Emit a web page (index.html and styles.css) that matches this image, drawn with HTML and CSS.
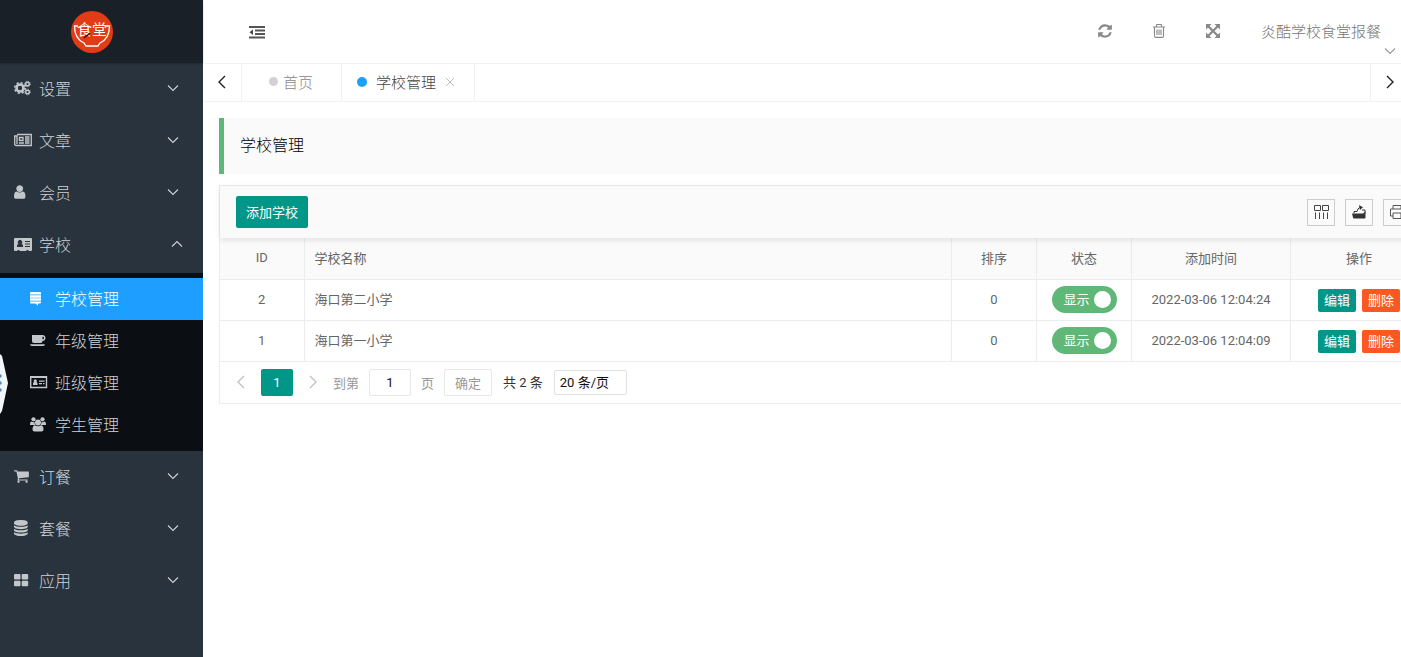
FILE: index.html
```html
<!DOCTYPE html>
<html lang="zh-CN">
<head>
    <meta charset="UTF-8">
    <meta name="viewport" content="width=device-width, initial-scale=1.0">
    <title>学校管理</title>

    <link rel="stylesheet" href="styles.css">
</head>
<body>
    <!-- 图标 -->
    <svg class="sprite" aria-hidden="true">
        <symbol id="down" viewBox="0 0 12 12"><path d="M1 3.500l5 5 5-5" fill="none" stroke="currentColor" stroke-width="1.100"/></symbol>
        <symbol id="up" viewBox="0 0 12 12"><path d="M1 8.500l5-5 5 5" fill="none" stroke="currentColor" stroke-width="1.100"/></symbol>
        <symbol id="left" viewBox="0 0 14 14"><path d="M10 1L4 7l6 6" fill="none" stroke="currentColor" stroke-width="1.400"/></symbol>
        <symbol id="right" viewBox="0 0 14 14"><path d="M4 1l6 6-6 6" fill="none" stroke="currentColor" stroke-width="1.400"/></symbol>
    </svg>

    <div class="layout">
        <aside class="sidebar">
            <div class="logo">
                <svg width="42" height="42" viewBox="0 0 42 42">
                    <circle cx="21" cy="21" r="21" fill="#e23b17"/>
                    <path d="M7 15H3.500c0 9 3 14 9.500 17l2 3h12l2-3c6.500-3 9.500-8 9.500-17H35" fill="none" stroke="#fff" stroke-width="1.300"/>
                    <text x="21" y="24" text-anchor="middle" class="logoText">食堂</text>
                    <path d="M13 27l2-2 2-1 2-2" fill="none" stroke="#3a1410" stroke-width="1.500"/>
                </svg>
            </div>

            <nav class="menu">
                <button class="menuItem">
                    <svg class="icon" viewBox="0 0 18 16">
                        <circle cx="6" cy="8" r="3.500" fill="none" stroke="currentColor" stroke-width="2.600"/>
                        <circle cx="6" cy="8" r="5.300" fill="none" stroke="currentColor" stroke-width="1.600" stroke-dasharray="2.080 2.080"/>
                        <circle cx="13.500" cy="4" r="1.800" fill="none" stroke="currentColor" stroke-width="1.400"/>
                        <circle cx="13.500" cy="4" r="2.800" fill="none" stroke="currentColor" stroke-width="1" stroke-dasharray="1.100 1.100"/>
                        <circle cx="13.500" cy="12" r="1.800" fill="none" stroke="currentColor" stroke-width="1.400"/>
                        <circle cx="13.500" cy="12" r="2.800" fill="none" stroke="currentColor" stroke-width="1" stroke-dasharray="1.100 1.100"/>
                    </svg>
                    <span>设置</span>
                    <svg class="arrow"><use href="#down"/></svg>
                </button>
                <button class="menuItem">
                    <svg class="icon" viewBox="0 0 18 16">
                        <path d="M3 2.500h14.300v11H2c-.8 0-1.300-.5-1.300-1.300V4H3v8" fill="none" stroke="currentColor" stroke-width="1.300"/>
                        <path d="M5.500 5.500h3.500v3H5.500zM5 11h5M11 5h4.500M11 7h4.500M11 9h4.500M11 11h4.500" fill="none" stroke="currentColor" stroke-width="1.300"/>
                    </svg>
                    <span>文章</span>
                    <svg class="arrow"><use href="#down"/></svg>
                </button>
                <button class="menuItem">
                    <svg class="icon" viewBox="384 0 2016 1792">
                        <path transform="translate(128 0)" d="M1536 1399q0 109-62.500 187t-150.500 78h-854q-88 0-150.500-78t-62.500-187q0-85 8.500-160.500t31.500-152 58.500-131 94-89 134.500-34.500q131 128 313 128t313-128q76 0 134.500 34.500t94 89 58.500 131 31.500 152 8.500 160.500zm-256-887q0 159-112.500 271.500t-271.500 112.500-271.500-112.500-112.500-271.500 112.500-271.500 271.500-112.500 271.500 112.500 112.500 271.500z" fill="currentColor"/>
                    </svg>
                    <span>会员</span>
                    <svg class="arrow"><use href="#down"/></svg>
                </button>
                <button class="menuItem">
                    <svg class="icon" viewBox="0 0 18 16">
                        <path fill="currentColor" fill-rule="evenodd" d="M1 2h16q1 0 1 1v11q0 1-1 1h-2.500v-1h-2v1h-7v-1h-2v1H1q-1 0-1-1V3q0-1 1-1zM3 11h6V9.500Q9 8 7.500 8a2.300 2.300 0 1 0-3 0Q3 8 3 9.500zM11 5v1h5V5zM11 7.500v1h5v-1zM11 10v1h5v-1z"/>
                    </svg>
                    <span>学校</span>
                    <svg class="arrow arrowUp"><use href="#up"/></svg>
                </button>

                <div class="subMenu">
                    <a href="#" class="subItem active">
                        <svg class="icon" viewBox="0 0 18 16">
                            <path fill="currentColor" d="M1 2h9q1 0 1 1v1.600H0V3q0-1 1-1zM0 5.200h11v2.500H0zM0 8.300h11v2.500H0zM0 11.400h11q0 2.200-1 2.200H8v2.200l-2.500-2.200H1q-1 0-1-2.200z"/>
                        </svg>
                        <span>学校管理</span>
                    </a>
                    <a href="#" class="subItem">
                        <svg class="icon" viewBox="0 0 18 16">
                            <path fill="currentColor" fill-rule="evenodd" d="M2 3h10.500c4 0 4 6 0 6 0 1.300-.7 2-2 2H4c-1.300 0-2-.7-2-2zM12.500 4.500v3c2 0 2-3 0-3zM0 12.300h15q0 1.700-2 1.700H2q-2 0-2-1.700z"/>
                        </svg>
                        <span>年级管理</span>
                    </a>
                    <a href="#" class="subItem">
                        <svg class="icon" viewBox="0 0 18 16">
                            <path d="M.7 2.700h15.800v10.800H.7z" fill="none" stroke="currentColor" stroke-width="1.400"/>
                            <path fill="currentColor" d="M1 3h15v1H1zM3 11V9.500Q3 8.500 4 8a1.600 1.600 0 1 1 2.500 0Q7.500 8.500 7.500 9.500V11zM9 6.500h5.500v1.200H9zM9 9h3v1.200H9zM13 9h1.500v1.200H13z"/>
                        </svg>
                        <span>班级管理</span>
                    </a>
                    <a href="#" class="subItem">
                        <svg class="icon" viewBox="0 0 18 16">
                            <g fill="currentColor">
                                <circle cx="3.500" cy="3.300" r="2.100"/>
                                <circle cx="12.500" cy="3.300" r="2.100"/>
                                <circle cx="8" cy="6.500" r="3"/>
                                <path d="M0 9Q0 5.500 1.500 5.500q1.500 1 3 .5 0 2 1 3zM16 9Q16 5.500 14.500 5.500q-1.500 1-3 .5 0 2-1 3zM2.500 13.500Q2.500 9.500 5 9.300q3 2 6 0 2.500.2 2.500 4.200 0 2-2 2h-7q-2 0-2-2z"/>
                            </g>
                        </svg>
                        <span>学生管理</span>
                    </a>
                </div>

                <button class="menuItem">
                    <svg class="icon" viewBox="64 0 2016 1792">
                        <path d="M704 1536q0 52-38 90t-90 38-90-38-38-90 38-90 90-38 90 38 38 90zm896 0q0 52-38 90t-90 38-90-38-38-90 38-90 90-38 90 38 38 90zm128-1088v512q0 24-16.500 42.500t-40.500 21.500l-1044 122q13 60 13 70 0 16-24 64h920q26 0 45 19t19 45-19 45-45 19h-1024q-26 0-45-19t-19-45q0-11 8-31.500t16-36 21.500-40 15.500-29.500l-177-823h-204q-26 0-45-19t-19-45 19-45 45-19h256q16 0 28.500 6.500t19.500 15.500 13 24.500 8 26 5.500 29.500 4.500 26h1201q26 0 45 19t19 45z" fill="currentColor"/>
                    </svg>
                    <span>订餐</span>
                    <svg class="arrow"><use href="#down"/></svg>
                </button>
                <button class="menuItem">
                    <svg class="icon" viewBox="128 0 2016 1792">
                        <path d="M896 768q237 0 443-43t325-127v170q0 69-103 128t-280 93.500-385 34.500-385-34.500-280-93.500-103-128v-170q119 84 325 127t443 43zm0 768q237 0 443-43t325-127v170q0 69-103 128t-280 93.500-385 34.500-385-34.500-280-93.500-103-128v-170q119 84 325 127t443 43zm0-384q237 0 443-43t325-127v170q0 69-103 128t-280 93.500-385 34.500-385-34.500-280-93.500-103-128v-170q119 84 325 127t443 43zm0-1152q208 0 385 34.500t280 93.500 103 128v128q0 69-103 128t-280 93.500-385 34.500-385-34.500-280-93.500-103-128v-128q0-69 103-128t280-93.500 385-34.500z" fill="currentColor"/>
                    </svg>
                    <span>套餐</span>
                    <svg class="arrow"><use href="#down"/></svg>
                </button>
                <button class="menuItem">
                    <svg class="icon" viewBox="0 0 18 16">
                        <g fill="currentColor">
                            <rect x="0" y="2" width="6.500" height="5.500" rx="1"/>
                            <rect x="7.700" y="2" width="6.500" height="5.500" rx="1"/>
                            <rect x="0" y="8.700" width="6.500" height="5.500" rx="1"/>
                            <rect x="7.700" y="8.700" width="6.500" height="5.500" rx="1"/>
                        </g>
                    </svg>
                    <span>应用</span>
                    <svg class="arrow"><use href="#down"/></svg>
                </button>
            </nav>
        </aside>

        <main class="main">
            <header class="header">
                <button class="iconBtn" aria-label="侧边伸缩">
                    <svg width="16" height="14" viewBox="0 0 16 14">
                        <path d="M0 2h16M6 5.500h10M6 9h10M0 12.500h16" stroke="#555" stroke-width="2"/>
                        <path d="M4 4.500v5.500L.5 7.300z" fill="#444"/>
                    </svg>
                </button>
                <div class="headerRight">
                    <button class="iconBtn" aria-label="刷新">
                        <svg width="16" height="16" viewBox="0 0 1792 1792">
                            <path d="M1639 1056q0 5-1 7-64 268-268 434.500t-478 166.500q-146 0-282.500-55t-243.500-157l-129 129q-19 19-45 19t-45-19-19-45v-448q0-26 19-45t45-19h448q26 0 45 19t19 45-19 45l-137 137q71 66 161 102t187 36q134 0 250-65t186-179q11-17 53-117 8-23 30-23h192q13 0 22.500 9.500t9.500 22.500zm25-800v448q0 26-19 45t-45 19h-448q-26 0-45-19t-19-45 19-45l138-138q-148-137-349-137-134 0-250 65t-186 179q-11 17-53 117-8 23-30 23h-199q-13 0-22.500-9.500t-9.500-22.500v-7q65-268 270-434.500t480-166.500q146 0 284 55.500t245 156.500l130-129q19-19 45-19t45 19 19 45z" fill="currentColor"/>
                        </svg>
                    </button>
                    <button class="iconBtn" aria-label="清理缓存">
                        <svg width="16" height="16" viewBox="0 0 16 16">
                            <path d="M2 4h12M5.500 4V2q0-.5.500-.5h4q.5 0 .5.500v2M3.500 4v9q0 1.400 1.200 1.400h6.600q1.200 0 1.200-1.400V4M6 6.500v5.500M8 6.500v5.500M10 6.500v5.500" fill="none" stroke="currentColor" stroke-width="1.100"/>
                        </svg>
                    </button>
                    <button class="iconBtn" aria-label="全屏">
                        <svg width="16" height="16" viewBox="0 0 16 16">
                            <path d="M3 3l10 10M13 3L3 13" stroke="currentColor" stroke-width="2.200"/>
                            <path d="M1 1h5.500L1 6.500zM15 1v5.500L9.500 1zM1 15V9.500L6.500 15zM15 15H9.500L15 9.500z" fill="currentColor"/>
                        </svg>
                    </button>
                    <button class="userBtn">炎酷学校食堂报餐<svg class="arrow"><use href="#down"/></svg></button>
                </div>
            </header>

            <div class="tabs">
                <button class="tabArrow" aria-label="向左"><svg width="14" height="14"><use href="#left"/></svg></button>
                <button class="tab tabHome"><i class="dot"></i>首页</button>
                <button class="tab tabActive"><i class="dot"></i>学校管理
                    <svg width="10" height="10" viewBox="0 0 10 10"><path d="M1 1l8 8M9 1L1 9" stroke="#bbb"/></svg>
                </button>
                <button class="tabArrow tabNext" aria-label="向右"><svg width="14" height="14"><use href="#right"/></svg></button>
            </div>

            <div class="content">
                <h1 class="pageTitle">学校管理</h1>

                <div class="card">
                    <div class="toolbar">
                        <button class="addBtn">添加学校</button>
                        <div class="tools">
                            <button class="toolBtn" aria-label="筛选列">
                                <svg width="16" height="16" viewBox="0 0 16 16">
                                    <path d="M1.500 1.500h6v5h-6zM9.500 1.500h6v5h-6zM2.500 8.500V15M6.500 8.500V15M10.500 8.500V15M14.500 8.500V15" fill="none" stroke="#444"/>
                                </svg>
                            </button>
                            <button class="toolBtn" aria-label="导出">
                                <svg width="16" height="16" viewBox="0 0 16 16">
                                    <path d="M1 9.500h11l2.500-2v6q0 1-1 1H3q-1 0-1-1z" fill="#333"/>
                                    <path d="M3 9V7.500h3M11 6h3v3M6 7.500q.5-3.500 3-4" fill="none" stroke="#333"/>
                                    <path d="M8 1l4 2.300L9 6z" fill="#333"/>
                                </svg>
                            </button>
                            <button class="toolBtn" aria-label="打印">
                                <svg width="16" height="16" viewBox="0 0 16 16">
                                    <path d="M4 5V1.500h8V5M4 12H1.500V5h13v7H12M4 9h8v5.500H4z" fill="none" stroke="#555"/>
                                </svg>
                            </button>
                        </div>
                    </div>

                    <table class="grid">
                        <colgroup>
                            <col class="colId">
                            <col>
                            <col class="colSort">
                            <col class="colState">
                            <col class="colTime">
                            <col class="colAction">
                        </colgroup>
                        <thead>
                            <tr>
                                <th>ID</th>
                                <th class="name">学校名称</th>
                                <th>排序</th>
                                <th>状态</th>
                                <th>添加时间</th>
                                <th>操作</th>
                            </tr>
                        </thead>
                        <tbody>
                            <tr>
                                <td>2</td>
                                <td class="name">海口第二小学</td>
                                <td>0</td>
                                <td><label class="switch"><input type="checkbox" checked><span>显示</span></label></td>
                                <td>2022-03-06 12:04:24</td>
                                <td><div class="actions"><button class="smallBtn">编辑</button><button class="smallBtn deleteBtn">删除</button></div></td>
                            </tr>
                            <tr>
                                <td>1</td>
                                <td class="name">海口第一小学</td>
                                <td>0</td>
                                <td><label class="switch"><input type="checkbox" checked><span>显示</span></label></td>
                                <td>2022-03-06 12:04:09</td>
                                <td><div class="actions"><button class="smallBtn">编辑</button><button class="smallBtn deleteBtn">删除</button></div></td>
                            </tr>
                        </tbody>
                    </table>

                    <div class="pager">
                        <button class="pageArrow" aria-label="上一页"><svg width="14" height="14"><use href="#left"/></svg></button>
                        <button class="pageNow">1</button>
                        <button class="pageArrow" aria-label="下一页"><svg width="14" height="14"><use href="#right"/></svg></button>
                        <label class="skip">到第 <input type="text" value="1"> 页</label>
                        <button class="okBtn">确定</button>
                        <span class="count">共 2 条</span>
                        <select class="limit" aria-label="每页条数">
                            <option>20 条/页</option>
                        </select>
                    </div>
                </div>
            </div>
        </main>
    </div>

    <!-- 左侧悬浮拉手 -->
    <svg class="handle" width="8" height="60" viewBox="0 0 8 60">
        <path d="M0 0l2 2 6 27-6 28-2 3z" fill="#f4f7fa"/>
        <g fill="#4d8fd0"><circle cx="0" cy="22" r="1.800"/><circle cx="0" cy="29" r="1.800"/><circle cx="0" cy="36" r="1.800"/></g>
    </svg>
</body>
</html>
```

FILE: styles.css
```css
* {
    box-sizing: border-box;
}

body {
    margin: 0;
    font-family: Roboto, "Noto Sans CJK SC", sans-serif;
    font-size: 13px;
    color: #666;
    background-color: white;
}

button {
    padding: 0;
    border: none;
    background: none;
    font: inherit;
    color: inherit;
    cursor: pointer;
}

svg {
    display: block;
    flex-shrink: 0;
}

.sprite {
    display: none;
}

.layout {
    display: flex;
    min-height: 100vh;
}

/* menu */
.sidebar {
    flex: 0 0 203px;
    background-color: #28333e;
}

.logo {
    display: flex;
    justify-content: center;
    align-items: center;
    height: 63px;
    padding-right: 19px;
    background-color: #192027;
    box-shadow: 0 1px 2px rgba(0,0,0,0.2);
}

.logoText {
    font-size: 15px;
    fill: white;
}

.menu {
    display: flex;
    flex-direction: column;
    font-size: 16px;
    font-weight: 300;
    color: #d0d2d4;
}

.menuItem, .subItem {
    display: flex;
    align-items: center;
    gap: 7px;
    height: 52px;
    padding: 0 24px 2px 14px;
}

.icon {
    width: 18px;
    height: 16px;
    color: #c4c7ca;
}

.arrow {
    width: 12px;
    height: 12px;
}

.menuItem .arrow {
    margin-left: auto;
}

.menuItem .arrowUp {
    margin-right: -4px;
}

.subMenu {
    margin-top: 2px;
    padding: 5px 0;
    background-color: #0b0e12;
}

.subItem {
    height: 42px;
    padding-left: 30px;
    color: inherit;
    text-decoration: none;
}

.active, .active .icon {
    color: white;
}

.active {
    background-color: #1e9fff;
}

.handle {
    position: fixed;
    left: 0;
    top: 354px;
}

/* header */
.main {
    flex: 1;
    min-width: 0;
    overflow: hidden;
}

.header {
    display: flex;
    justify-content: space-between;
    align-items: center;
    height: 64px;
    padding: 0 20px 0 46px;
    border-bottom: 1px solid #f2f2f2;
}

.headerRight {
    display: flex;
    align-items: center;
    gap: 38px;
    padding-bottom: 2px;
    color: #888;
}

.userBtn {
    position: relative;
    margin-left: 2px;
    font-size: 15px;
    font-weight: 300;
    color: #777;
}

.userBtn .arrow {
    position: absolute;
    right: -15px;
    top: 25px;
    color: #999;
}

.tabs {
    display: flex;
    height: 38px;
    border-bottom: 1px solid #f2f2f2;
    font-size: 15px;
    font-weight: 300;
}

.tabArrow {
    display: flex;
    justify-content: center;
    align-items: center;
    width: 39px;
    padding-bottom: 2px;
    border-right: 1px solid #f2f2f2;
    color: #222;
}

.tabNext {
    width: 31px;
    padding-left: 7px;
    margin-left: auto;
    border-right: none;
    border-left: 1px solid #f2f2f2;
}

.tab {
    display: flex;
    align-items: center;
    gap: 9px;
    padding: 0 19px 2px 15px;
    border-right: 1px solid #f2f2f2;
    color: #444;
}

.tabHome {
    gap: 5px;
    padding: 0 28px 2px 27px;
    color: #888;
}

.dot {
    width: 9px;
    height: 9px;
    border-radius: 50%;
    background-color: #d2d2d2;
}

.tabActive .dot {
    width: 10px;
    height: 10px;
    background-color: #1e9fff;
}

/* content, runs past the right edge like the table */
.content {
    padding: 16px 0 16px 16px;
    margin-right: -28px;
}

.pageTitle {
    margin: 0 0 11px;
    padding: 16px;
    border-left: 5px solid #5fb878;
    background-color: #fafafa;
    font-size: 16px;
    font-weight: 300;
    line-height: 24px;
    color: black;
}

.card {
    border: 1px solid #ececec;
}

.toolbar {
    position: relative;
    display: flex;
    justify-content: space-between;
    align-items: center;
    height: 52px;
    padding: 0 17px 0 16px;
    background-color: #fafafa;
    box-shadow: 0 2px 6px rgba(0,0,0,0.1);
}

.addBtn {
    height: 32px;
    padding: 0 10px 2px;
    border-radius: 2px;
    background-color: #009688;
    color: white;
}

.tools {
    display: flex;
    gap: 10px;
}

.toolBtn {
    display: flex;
    justify-content: center;
    align-items: center;
    width: 28px;
    height: 27px;
    border: 1px solid #ccc;
}

.grid {
    width: 100%;
    table-layout: fixed;
    border-collapse: collapse;
}

.colId {
    width: 84px;
}

.colSort {
    width: 85px;
}

.colState {
    width: 95px;
}

.colTime {
    width: 159px;
}

.colAction {
    width: 137px;
}

th, td {
    height: 41px;
    padding: 0 0 1px;
    border-right: 1px solid #ececec;
    border-bottom: 1px solid #ececec;
    font-weight: normal;
    text-align: center;
}

th {
    padding-bottom: 2px;
    background-color: #fafafa;
}

.name {
    padding-left: 10px;
    padding-bottom: 2px;
    text-align: left;
}

.switch {
    display: flex;
    justify-content: space-between;
    align-items: center;
    width: 65px;
    height: 27px;
    margin: 1px auto 0;
    padding: 0 6px 0 12px;
    border-radius: 14px;
    background-color: #5fb878;
    color: white;
}

.switch span {
    order: -1;
    padding-bottom: 3px;
}

.switch input {
    appearance: none;
    width: 17px;
    height: 17px;
    margin: 0;
    border-radius: 50%;
    background-color: white;
}

.actions {
    display: flex;
    justify-content: center;
    gap: 6px;
    padding-top: 2px;
}

.smallBtn {
    width: 38px;
    height: 23px;
    padding-bottom: 2px;
    border-radius: 2px;
    background-color: #009688;
    color: white;
}

.deleteBtn {
    background-color: #ff5722;
}

.pager {
    display: flex;
    align-items: center;
    height: 41px;
    padding-left: 14px;
    color: #999;
}

.pageArrow {
    color: #c2c2c2;
}

.pageNow {
    width: 32px;
    height: 27px;
    margin: 0 13px;
    border-radius: 2px;
    background-color: #009688;
    color: white;
}

.skip {
    display: flex;
    align-items: center;
    gap: 10px;
    margin: 0 10px 0 13px;
}

.skip input {
    width: 42px;
    height: 27px;
    padding: 0;
    border: 1px solid #e6e6e6;
    border-radius: 2px;
    font: inherit;
    color: #111;
    text-align: center;
}

.okBtn {
    width: 48px;
    height: 27px;
    border: 1px solid #e6e6e6;
    border-radius: 2px;
}

.count {
    margin: 0 11px;
    padding-bottom: 2px;
    color: #333;
}

.limit {
    appearance: none;
    width: 73px;
    height: 25px;
    padding: 0 5px;
    border: 1px solid #e2e2e2;
    border-radius: 2px;
    background-color: white;
    font: inherit;
    color: #111;
}
```
